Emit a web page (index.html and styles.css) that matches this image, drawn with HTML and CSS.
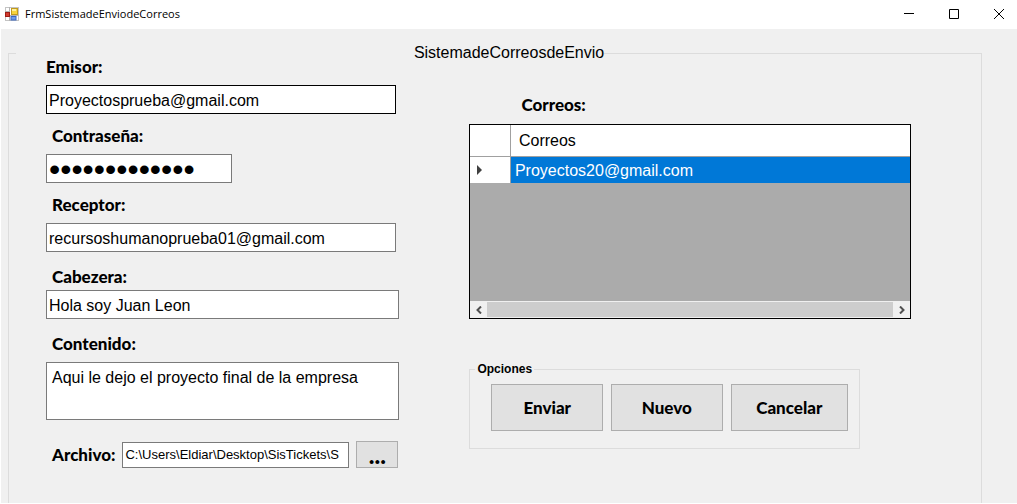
FILE: index.html
```html
<!DOCTYPE html>
<html lang="es">
<head>
<meta charset="utf-8">
<title>FrmSistemadeEnviodeCorreos</title>
<link rel="stylesheet" href="styles.css">
</head>
<body>
<div class="window">
  <header class="titlebar">
    <svg class="titlebar-icon" viewBox="0 0 14 14" aria-hidden="true">
      <rect x="0.5" y="0.5" width="13" height="13" fill="#fff" stroke="#c4c4c4"/>
      <path d="M0 4.5h5M4.500 0v14M4.500 8.500h9" stroke="#b4b4b4" fill="none"/>
      <rect x="6.500" y="1.500" width="6" height="6" fill="#f7d43c" stroke="#c09a1e"/>
      <path d="M7 2h4v2H7z" fill="#fdf0a0"/>
      <rect x="0.500" y="5.500" width="4" height="4" fill="#d23a2c" stroke="#9c1d16"/>
      <rect x="6" y="9.500" width="5" height="3.500" fill="#6f9bea" stroke="#3866c0"/>
    </svg>
    <h1 class="titlebar-text">FrmSistemadeEnviodeCorreos</h1>
    <div class="titlebar-controls">
      <button class="caption-button" type="button" aria-label="Minimizar"><svg viewBox="0 0 10 10"><path d="M0 4.500h10"/></svg></button>
      <button class="caption-button" type="button" aria-label="Maximizar"><svg viewBox="0 0 10 10"><path d="M.5.5h9v9h-9z"/></svg></button>
      <button class="caption-button" type="button" aria-label="Cerrar"><svg viewBox="0 0 10 10"><path d="M0 0l10 10M10 0L0 10"/></svg></button>
    </div>
  </header>
  <form class="client">
    <fieldset class="group">
      <legend class="group-legend">SistemadeCorreosdeEnvio</legend>
      <div class="columns">
        <div class="mail-form">
          <div class="field field-first">
            <label class="label" for="emisor">Emisor:</label>
            <input class="textbox textbox-focus" id="emisor" type="text" value="Proyectosprueba@gmail.com">
          </div>
          <div class="field">
            <label class="label" for="clave">Contraseña:</label>
            <input class="textbox textbox-short" id="clave" type="password" value="proyectos1234">
          </div>
          <div class="field">
            <label class="label" for="receptor">Receptor:</label>
            <input class="textbox" id="receptor" type="text" value="recursoshumanoprueba01@gmail.com">
          </div>
          <div class="field field-wide field-tight">
            <label class="label" for="cabezera">Cabezera:</label>
            <input class="textbox" id="cabezera" type="text" value="Hola soy Juan Leon">
          </div>
          <div class="field field-wide">
            <label class="label" for="contenido">Contenido:</label>
            <textarea class="textbox textbox-multi" id="contenido">Aqui le dejo el proyecto final de la empresa</textarea>
          </div>
          <div class="file-row">
            <label class="label" for="archivo">Archivo:</label>
            <input class="textbox textbox-file" id="archivo" type="text" value="C:\Users\Eldiar\Desktop\SisTickets\S">
            <button class="button button-browse" type="button">...</button>
          </div>
        </div>
        <div class="mail-list">
          <h2 class="label list-title">Correos:</h2>
          <div class="grid">
            <table class="grid-table">
              <thead><tr><th class="grid-marker"></th><th class="grid-head">Correos</th></tr></thead>
              <tbody><tr>
                <td class="grid-marker"><svg class="marker" viewBox="0 0 5 10" aria-hidden="true"><path d="M0 0l5 5-5 5z"/></svg></td>
                <td class="grid-cell">Proyectos20@gmail.com</td>
              </tr></tbody>
            </table>
            <div class="scrollbar">
              <button class="scroll-button" type="button" aria-label="Izquierda"><svg viewBox="0 0 6 8"><path d="M5 .5L1.500 4L5 7.500"/></svg></button>
              <div class="scroll-thumb"></div>
              <button class="scroll-button" type="button" aria-label="Derecha"><svg viewBox="0 0 6 8"><path d="M1 .5L4.500 4L1 7.500"/></svg></button>
            </div>
          </div>
          <fieldset class="options">
            <legend class="options-legend">Opciones</legend>
            <div class="options-buttons">
              <button class="button" type="button">Enviar</button>
              <button class="button" type="button">Nuevo</button>
              <button class="button button-wide" type="button">Cancelar</button>
            </div>
          </fieldset>
        </div>
      </div>
    </fieldset>
  </form>
</div>
</body>
</html>
```
FILE: styles.css
```css
* {
  box-sizing: border-box;
}

body {
  margin: 0;
  background: #fff;
  color: #000;
  font: 16px/22px "Liberation Sans", Arial, sans-serif;
}

.window {
  display: flex;
  flex-direction: column;
  height: 100vh;
  padding: 0 0 1px 1px;
}

.titlebar {
  display: flex;
  align-items: center;
  flex: none;
  height: 29px;
  padding: 0 0 2px 4px;
}

.titlebar-icon {
  width: 14px;
  height: 14px;
}

.titlebar-text {
  flex: 1;
  margin: 0 0 0 6px;
  font: 11px/16px "Segoe UI", "Open Sans", sans-serif;
}

.titlebar-controls {
  display: flex;
}

.caption-button {
  display: flex;
  align-items: center;
  justify-content: center;
  width: 45px;
  height: 26px;
  padding: 0 0 0 8px;
  border: 0;
  background: none;
}

.caption-button svg {
  width: 10px;
  height: 10px;
  fill: none;
  stroke: #000;
}

.client {
  flex: 1;
  min-height: 0;
  padding: 14px 35px 0 7px;
  overflow: hidden;
  background: #f0f0f0;
}

.group {
  min-width: 0;
  min-height: 100vh;
  margin: 0;
  padding: 0 70px 0 37px;
  border: 1px solid #dcdcdc;
}

.group-legend {
  width: 68%;
  margin-left: -30px;
  padding: 0 0 0 46%;
  line-height: 20px;
}

.columns {
  display: grid;
  grid-template-columns: 353fr 441fr;
  gap: 70px;
  margin-top: -6px;
}

.mail-form,
.mail-list,
.field {
  display: flex;
  flex-direction: column;
  min-width: 0;
}

.field {
  gap: 8px;
  padding: 12px 3px 0 0;
}

.field-first {
  padding-top: 0;
}

.field-wide {
  padding: 15px 0 0;
}

.field-tight {
  gap: 3px;
}

.label {
  margin: 0;
  padding-left: 6px;
  font: 900 17px/20px "Comic Sans MS", "Lato", sans-serif;
}

.field-first .label {
  padding-left: 0;
}

.textbox {
  width: 100%;
  min-width: 0;
  height: 29px;
  margin: 0;
  padding: 2px 2px 0;
  border: 1px solid #7a7a7a;
  border-radius: 0;
  outline: 0;
  background: #fff;
  color: #000;
  font: inherit;
}

.textbox-focus {
  border-color: #000;
}

.textbox-short {
  width: 53%;
  font-size: 32px;
}

.textbox-multi {
  height: 58px;
  padding: 4px 5px;
  resize: none;
}

.file-row {
  display: flex;
  align-items: center;
  gap: 7px;
  margin-top: 21px;
  padding-right: 1px;
}

.textbox-file {
  flex: 1;
  height: 26px;
  padding-top: 0;
  font-size: 13px;
}

.button {
  flex: 111;
  height: 47px;
  padding: 0;
  border: 1px solid #adadad;
  background: #e1e1e1;
  color: #000;
  font: 900 17px/20px "Comic Sans MS", "Lato", sans-serif;
}

.button-browse {
  flex: none;
  width: 42px;
  height: 27px;
  font-size: 24px;
}

.button-wide {
  flex: 117;
}

.list-title {
  padding: 38px 0 0 52px;
}

.grid {
  display: flex;
  flex-direction: column;
  height: 195px;
  margin-top: 9px;
  border: 1px solid #000;
  background: #ababab;
}

.grid-table {
  width: 100%;
  border-collapse: collapse;
  table-layout: fixed;
}

.grid-table th,
.grid-table td {
  padding: 0 0 0 4px;
  background: #fff;
  font-weight: normal;
  text-align: left;
}

.grid-table th {
  height: 31px;
  border-bottom: 1px solid #a0a0a0;
}

.grid-table td {
  height: 27px;
}

.grid-table .grid-marker {
  width: 40px;
  padding-left: 7px;
  border-right: 1px solid #a0a0a0;
}

.grid-table .grid-head {
  padding: 2px 0 0 8px;
}

.grid-table .grid-cell {
  padding-top: 2px;
  background: #0078d7;
  color: #fff;
}

.marker {
  display: block;
  width: 5px;
  height: 10px;
  fill: #404040;
}

.scrollbar {
  display: flex;
  height: 17px;
  margin-top: auto;
  background: #f0f0f0;
}

.scroll-button {
  display: flex;
  align-items: center;
  justify-content: center;
  width: 17px;
  padding: 0;
  border: 0;
  background: none;
}

.scroll-button svg {
  width: 6px;
  height: 8px;
  fill: none;
  stroke: #505050;
  stroke-width: 2;
}

.scroll-thumb {
  flex: 1;
  margin: 1px 0;
  background: #cdcdcd;
}

.options {
  min-width: 0;
  margin: 43px 51px 0 0;
  padding: 0 11px 17px 21px;
  border: 1px solid #dcdcdc;
}

.options-legend {
  margin-left: -16px;
  padding: 0 2px;
  font: bold 12px/14px "Liberation Sans", sans-serif;
}

.options-buttons {
  display: flex;
  gap: 8px;
  padding-top: 8px;
}
```
